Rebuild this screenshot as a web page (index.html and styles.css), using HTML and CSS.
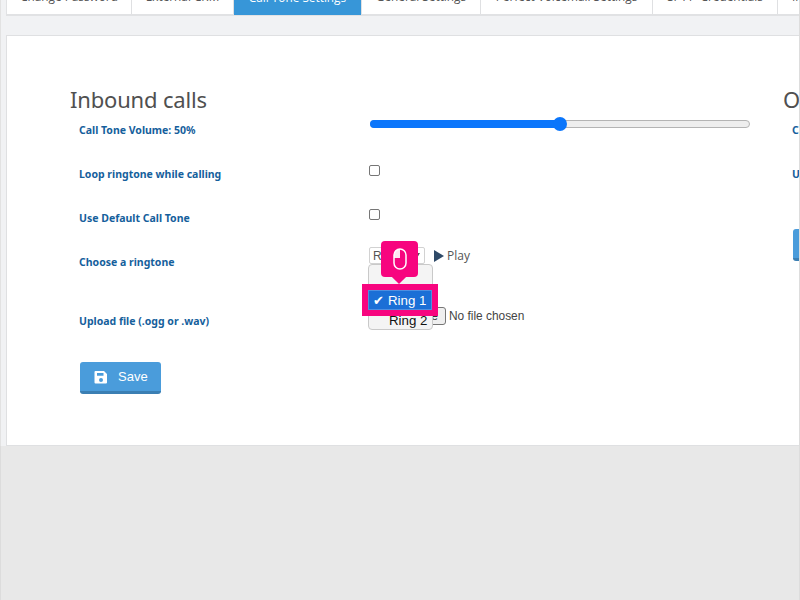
FILE: index.html
```html
<!DOCTYPE html>
<html lang="en">
<head>
<meta charset="utf-8">
<title>Call Tone Settings</title>
<link rel="stylesheet" href="styles.css">
</head>
<body>
<div class="shell">
  <div class="content">
    <nav class="tabs">
      <a class="tab w1">Change Password</a>
      <a class="tab w2">External CRM</a>
      <a class="tab w3 active">Call Tone Settings</a>
      <a class="tab w4">General Settings</a>
      <a class="tab w5">Perfect Voicemail Settings</a>
      <a class="tab w6">SPTT- Credentials</a>
      <a class="tab w7">Integrations</a>
    </nav>
    <main class="panel">
      <section class="col col-in">
        <h2 class="heading">Inbound calls</h2>
        <div class="row">
          <label class="label">Call Tone Volume: 50%</label>
          <div class="slider"><div class="fill"></div><div class="thumb"></div></div>
        </div>
        <div class="row">
          <label class="label">Loop ringtone while calling</label>
          <span class="check"></span>
        </div>
        <div class="row">
          <label class="label">Use Default Call Tone</label>
          <span class="check"></span>
        </div>
        <div class="row">
          <label class="label">Choose a ringtone</label>
          <div class="ring-ctl">
            <span class="select">Ring 1<i class="caret"></i></span>
            <span class="play"><i class="tri"></i>Play</span>
          </div>
        </div>
        <div class="row r-upload">
          <label class="label">Upload file (.ogg or .wav)</label>
          <div class="file">
            <span class="file-btn">Choose File</span>
            <span class="file-name">No file chosen</span>
          </div>
        </div>
        <button class="save">
          <svg class="save-ico" viewBox="0 0 14 14" aria-hidden="true"><path fill="#fff" fill-rule="evenodd" d="M1.500 1H10l3 3v8.500a1 1 0 0 1-1 1H1.500a1 1 0 0 1-1-1V2a1 1 0 0 1 1-1zM3 3v2.800h6.500V3zM7 8a2 2 0 1 0 0 4 2 2 0 0 0 0-4z"/></svg>
          Save
        </button>
      </section>
      <section class="col col-out">
        <h2 class="heading">Outbound calls</h2>
        <div class="row"><label class="label">Call Tone Volume: 50%</label></div>
        <div class="row"><label class="label">Use Default Call Tone</label></div>
        <button class="save save-out">Save</button>
      </section>

      <div class="popup">
        <div class="popup-item">Ring 2</div>
      </div>
      <div class="hilite"><div class="opt"><span class="tick">✔</span>Ring 1</div></div>
      <div class="pin">
        <svg class="mouse" viewBox="0 0 14 22" aria-hidden="true">
          <rect x="1" y="1" width="12" height="20" rx="6" fill="none" stroke="#fff" stroke-width="1.500"/>
          <path fill="#fff" d="M7 1A6 6 0 0 0 1 7v3h6z" opacity=".9"/>
        </svg>
      </div>
    </main>
  </div>
  <div class="foot"></div>
</div>
</body>
</html>
```
FILE: styles.css
```css
* { box-sizing: border-box; }
html, body { margin: 0; height: 100%; overflow: hidden; }
body { background: #e8e8e8; font-family: "Liberation Sans", Arial, sans-serif; }
.shell { width: 800px; height: 600px; display: flex; flex-direction: column; border-right: 1px solid #ddd; }
.content { height: 446px; background: #f1f2f4; padding-left: 5px; border-left: 1px solid #e2e2e2; overflow: hidden; flex: none; }
.foot { flex: 1; border-left: 1px solid #dcdcdc; }

.tabs { display: flex; height: 16px; background: #e1e2e4; padding: 0 0 2px 1px; overflow: hidden; align-items: flex-end; }
.tab { display: flex; justify-content: center; align-items: flex-end; height: 30px; flex: none; margin-top: -16px; padding-bottom: 9px; background: #fff; border-right: 1px solid #dfe0e2; font: 11.800px/17px "Open Sans", sans-serif; color: #555; }
.tab.active { background: #3796d8; color: #fff; height: 31px; margin-bottom: -1px; }
.w1 { width: 125px; }
.w2 { width: 102px; }
.w3 { width: 128px; }
.w4 { width: 119px; }
.w5 { width: 172px; }
.w6 { width: 125px; }
.w7 { width: 60px; justify-content: flex-start; padding-left: 14px; white-space: nowrap; }

.panel { position: relative; margin-top: 19px; height: 411px; background: #fff; border: 1px solid #dfe0e2; border-right: 0; display: flex; overflow: hidden; padding: 54px 0 0 63px; }
.col { flex: none; }
.col-in { width: 713px; }
.col-out { width: 300px; }
.heading { margin: 0; font: 400 22px/18px "Noto Sans", sans-serif; color: #505050; letter-spacing: -.18px; white-space: nowrap; }
.row { display: flex; align-items: center; height: 44px; padding-left: 9px; }
.r-upload { margin-top: 15px; }
.label { width: 291px; flex: none; font: 700 10.500px/14px "Noto Sans", sans-serif; color: #15609c; white-space: nowrap; }

.slider { position: relative; width: 380px; height: 8px; margin-top: -12px; background: #eee; border: 1px solid #b4b4b4; border-radius: 4px; }
.fill { position: absolute; left: -1px; top: -1px; width: 190px; height: 8px; background: #0b76fb; border-radius: 4px 0 0 4px; }
.thumb { position: absolute; left: 182px; top: -4px; width: 14px; height: 14px; border-radius: 50%; background: #0b76fb; }
.check { display: block; width: 11px; height: 11px; margin: -7px 0 0 -1px; border: 1px solid #767676; border-radius: 2px; background: #fff; }

.ring-ctl { display: flex; align-items: center; gap: 8px; margin: -13px 0 0 -1px; }
.select { display: flex; align-items: center; justify-content: space-between; width: 56px; height: 17px; padding: 0 4px 0 3px; border: 1px solid #d2d2d2; border-radius: 2px; font-size: 12px; color: #555; }
.caret { width: 0; height: 0; border: 3px solid transparent; border-top: 5px solid #555; border-bottom: 0; }
.play { display: flex; align-items: center; gap: 3px; margin-left: 1px; font: 12px/14px "Open Sans", sans-serif; color: #555; }
.tri { width: 0; height: 0; border-left: 10px solid #2f4a68; border-top: 6px solid transparent; border-bottom: 6px solid transparent; }
.file { display: flex; align-items: center; gap: 3px; margin-top: -10px; }
.file-btn { width: 76px; height: 18px; border: 1px solid #767676; border-radius: 3px; background: #efefef; font-size: 12px; line-height: 16px; color: #333; text-align: right; padding-right: 7px; white-space: nowrap; overflow: hidden; }
.file-name { font-size: 11.900px; line-height: 16px; color: #444; }

.save { display: flex; align-items: center; gap: 10px; margin: 19px 0 0 10px; width: 81px; height: 32px; padding: 0 0 0 14px; border: 0; border-bottom: 3px solid #3b7fb3; border-radius: 3px; background: #4a9cdb; color: #fff; font: 13px/14px "Liberation Sans", sans-serif; }
.save-ico { width: 14px; height: 14px; }
.save-out { margin: 33px 0 0 10px; width: 80px; }

.popup { position: absolute; left: 361px; top: 228px; width: 65px; height: 66px; background: #f4f4f4; border: 1px solid #c9c9c9; border-radius: 4px; }
.popup-item { position: absolute; left: 20px; bottom: 0; font-size: 13.300px; line-height: 17px; color: #111; }
.hilite { position: absolute; left: 355px; top: 248px; width: 76px; height: 32px; border: 5px solid #f7057f; background: #f7057f; }
.opt { height: 20px; margin: 1px; background: #1b6fd6; color: #fff; font-size: 13.300px; line-height: 19px; padding-left: 4px; white-space: nowrap; border: 1px solid #4f8fe0; }
.tick { display: inline-block; width: 15px; font-family: "DejaVu Sans", sans-serif; font-size: 13px; }
.pin { position: absolute; left: 374px; top: 205px; width: 37px; height: 36px; background: #f7057f; border-radius: 4px; display: flex; align-items: center; justify-content: center; }
.pin::after { content: ""; position: absolute; left: 13px; bottom: -5px; width: 10px; height: 10px; background: #f7057f; transform: rotate(45deg); }
.mouse { width: 14px; height: 22px; }
```
